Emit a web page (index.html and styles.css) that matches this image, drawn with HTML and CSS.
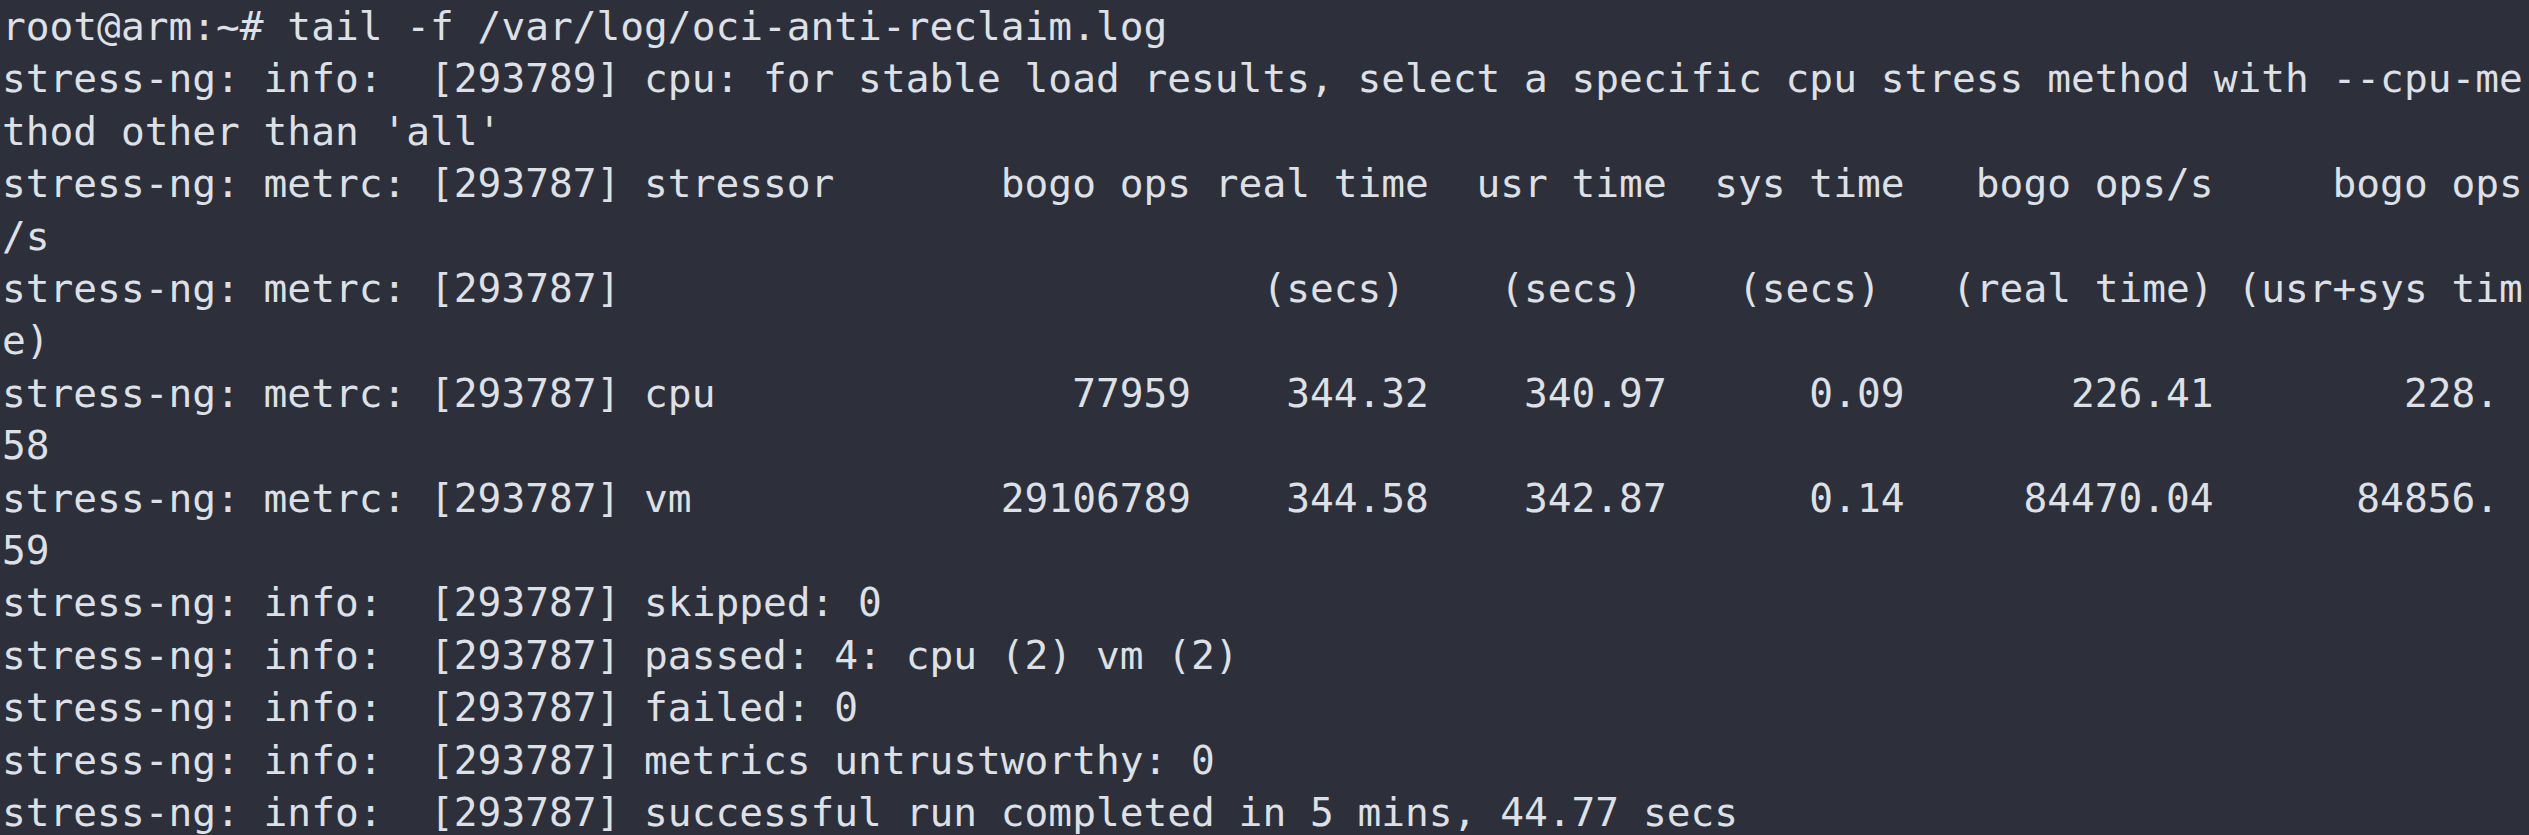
FILE: index.html
```html
<!DOCTYPE html>
<html lang="en">
<head>
<meta charset="utf-8">
<title>tail -f /var/log/oci-anti-reclaim.log</title>
<link rel="stylesheet" href="styles.css">
</head>
<body>
<main class="term">
<div class="line">root@arm:~# tail -f /var/log/oci-anti-reclaim.log</div>
<div class="line">stress-ng: info:  [293789] cpu: for stable load results, select a specific cpu stress method with --cpu-me</div>
<div class="line">thod other than 'all'</div>
<div class="line">stress-ng: metrc: [293787] stressor       bogo ops real time  usr time  sys time   bogo ops/s     bogo ops</div>
<div class="line">/s</div>
<div class="line">stress-ng: metrc: [293787]                           (secs)    (secs)    (secs)   (real time) (usr+sys tim</div>
<div class="line">e)</div>
<div class="line">stress-ng: metrc: [293787] cpu               77959    344.32    340.97      0.09       226.41        228.</div>
<div class="line">58</div>
<div class="line">stress-ng: metrc: [293787] vm             29106789    344.58    342.87      0.14     84470.04      84856.</div>
<div class="line">59</div>
<div class="line">stress-ng: info:  [293787] skipped: 0</div>
<div class="line">stress-ng: info:  [293787] passed: 4: cpu (2) vm (2)</div>
<div class="line">stress-ng: info:  [293787] failed: 0</div>
<div class="line">stress-ng: info:  [293787] metrics untrustworthy: 0</div>
<div class="line">stress-ng: info:  [293787] successful run completed in 5 mins, 44.77 secs</div>
</main>
</body>
</html>
```

FILE: styles.css
```css
html, body {
  margin: 0;
  padding: 0;
  background: #2d303b;
  height: 100%;
  overflow: hidden;
}

.term {
  display: flex;
  flex-direction: column;
  padding: 0 0 0 2px;
  font-family: "DejaVu Sans Mono", "Liberation Mono", monospace;
  font-size: 39.5px;
  line-height: 52.4px;
  color: #dde0e6;
}

.line {
  white-space: pre;
}
```
